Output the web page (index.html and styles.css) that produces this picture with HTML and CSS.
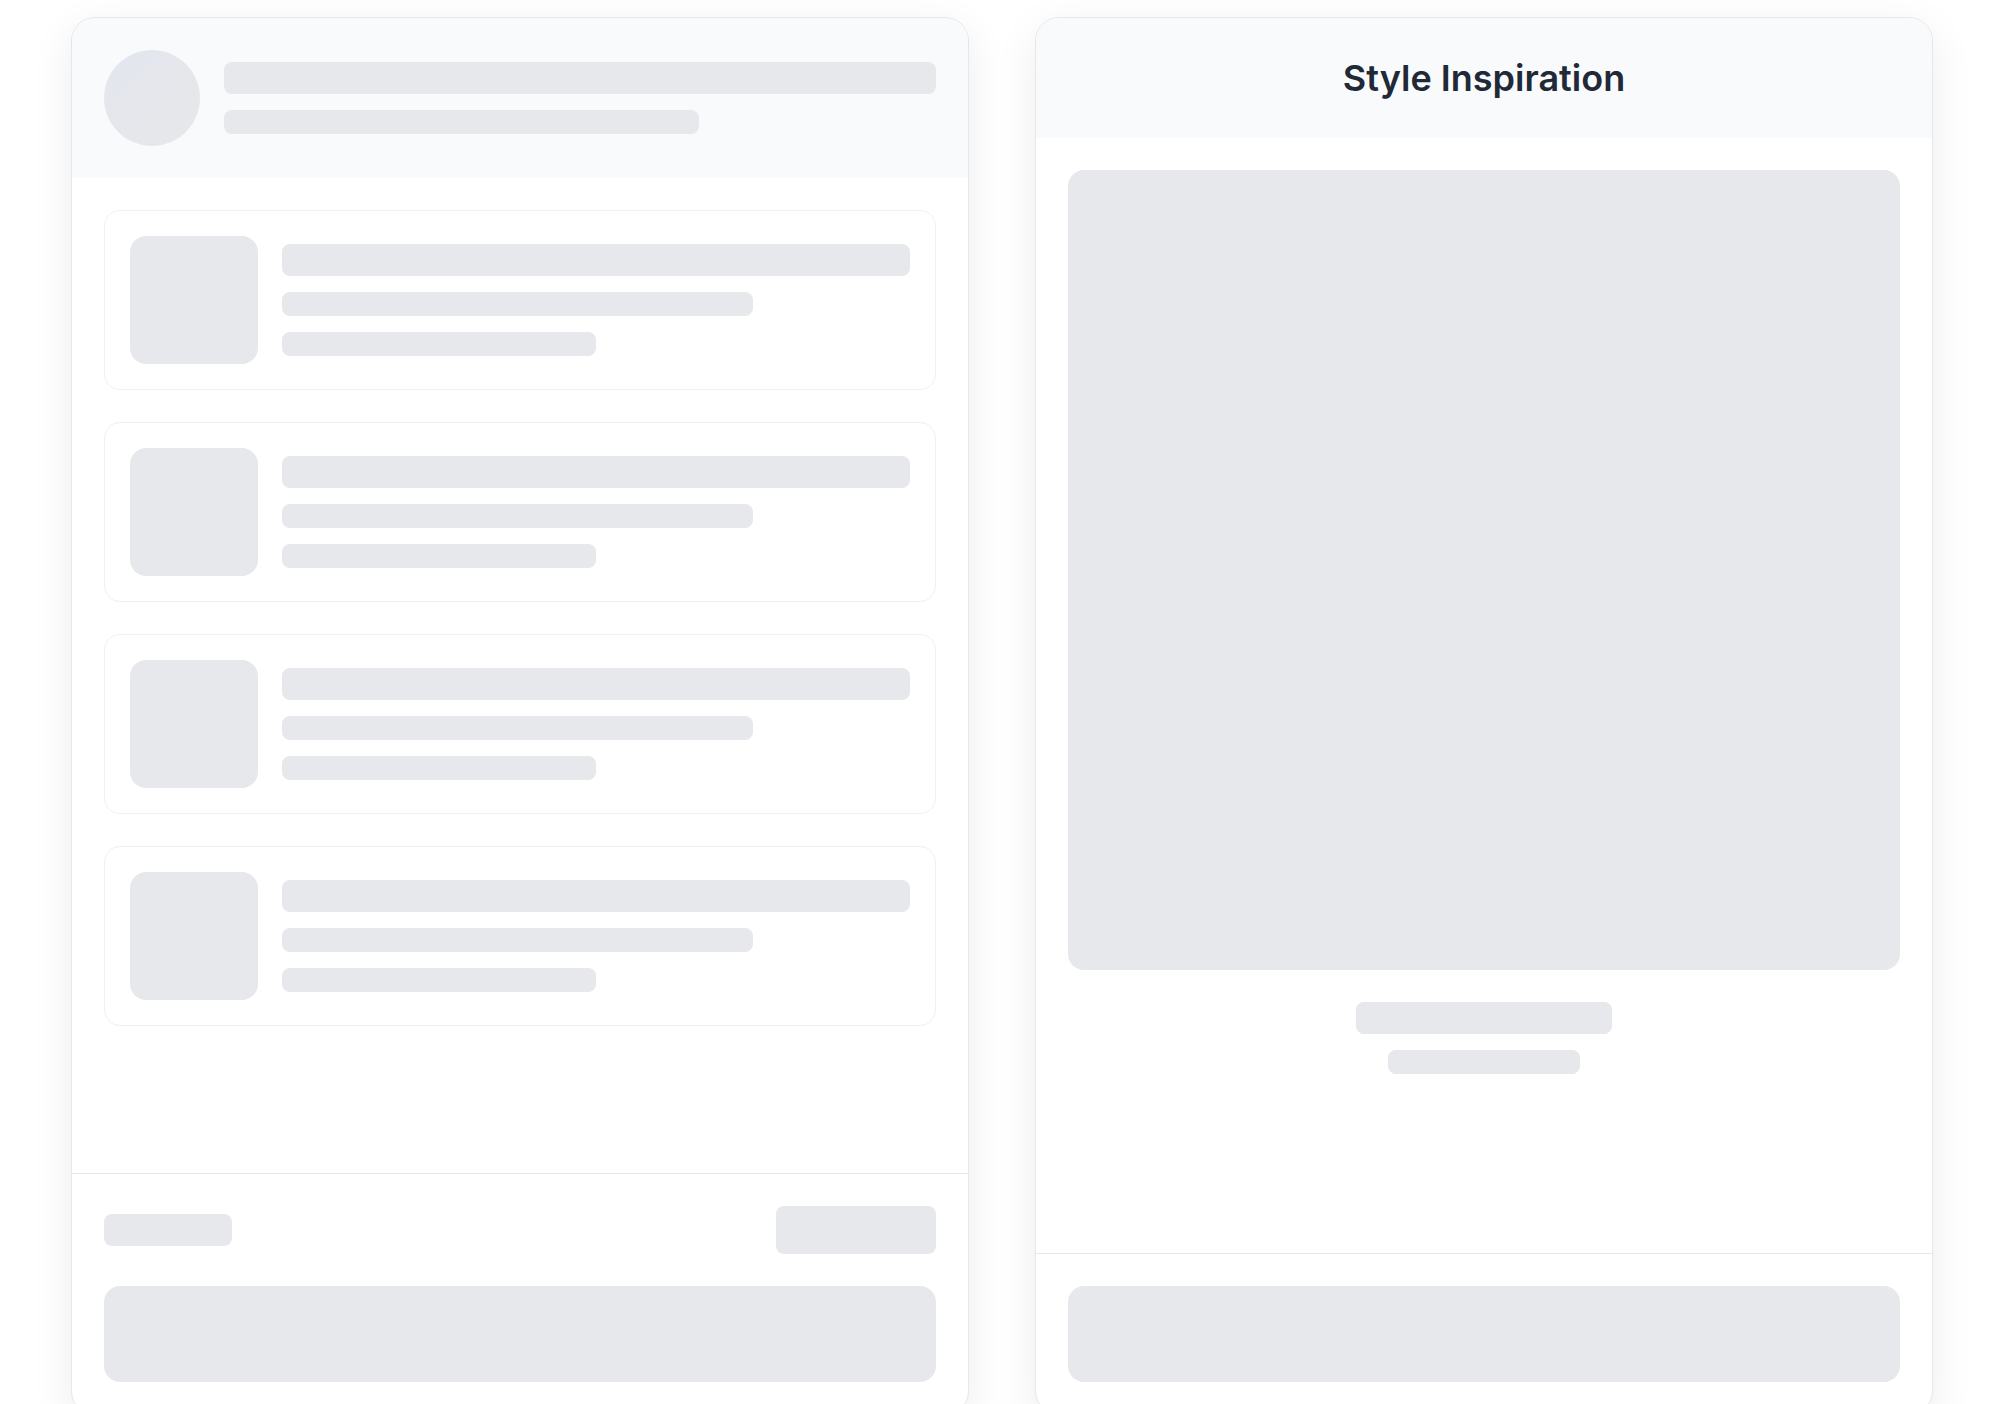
FILE: index.html
```html
<!DOCTYPE html>
<html lang="en">
<head>
<meta charset="utf-8">
<title>Skeleton</title>
<link rel="stylesheet" href="styles.css">
</head>
<body>
<main class="page">
  <section class="card">
    <header class="card-head profile">
      <div class="avatar"></div>
      <div class="head-lines">
        <div class="sk sk-32 w-full"></div>
        <div class="sk sk-24 w-two-thirds"></div>
      </div>
    </header>
    <div class="card-body list">
      <div class="item">
        <div class="thumb"></div>
        <div class="item-lines">
          <div class="sk sk-32 w-full"></div>
          <div class="sk sk-24 w-75"></div>
          <div class="sk sk-24 w-50"></div>
        </div>
      </div>
      <div class="item">
        <div class="thumb"></div>
        <div class="item-lines">
          <div class="sk sk-32 w-full"></div>
          <div class="sk sk-24 w-75"></div>
          <div class="sk sk-24 w-50"></div>
        </div>
      </div>
      <div class="item">
        <div class="thumb"></div>
        <div class="item-lines">
          <div class="sk sk-32 w-full"></div>
          <div class="sk sk-24 w-75"></div>
          <div class="sk sk-24 w-50"></div>
        </div>
      </div>
      <div class="item">
        <div class="thumb"></div>
        <div class="item-lines">
          <div class="sk sk-32 w-full"></div>
          <div class="sk sk-24 w-75"></div>
          <div class="sk sk-24 w-50"></div>
        </div>
      </div>
    </div>
    <footer class="card-foot">
      <div class="foot-row">
        <div class="sk sk-32 foot-label"></div>
        <div class="sk foot-btn"></div>
      </div>
      <div class="sk big-btn"></div>
    </footer>
  </section>

  <section class="card">
    <header class="card-head title-head">
      <h1 class="title">Style Inspiration</h1>
    </header>
    <div class="card-body preview">
      <div class="sk image"></div>
      <div class="caption">
        <div class="sk sk-32 cap-1"></div>
        <div class="sk sk-24 cap-2"></div>
      </div>
    </div>
    <footer class="card-foot">
      <div class="sk big-btn"></div>
    </footer>
  </section>
</main>
</body>
</html>
```

FILE: styles.css
```css
html, body {
  margin: 0;
  padding: 0;
  background: #ffffff;
  height: 100%;
  overflow: hidden;
}

body {
  font-family: Inter, "Liberation Sans", sans-serif;
}

.page {
  display: grid;
  grid-template-columns: 898px 898px;
  column-gap: 66px;
  padding: 17px 0 0 71px;
}

.card {
  box-sizing: border-box;
  height: 1398px;
  display: flex;
  flex-direction: column;
  background: #ffffff;
  border: 1px solid #e5e7eb;
  border-radius: 24px;
  overflow: hidden;
  box-shadow: 0 12px 44px rgba(0, 0, 0, 0.075);
}

.card-head {
  background: #f9fafb;
}

.profile {
  display: flex;
  align-items: center;
  gap: 24px;
  padding: 32px;
}

.avatar {
  width: 96px;
  height: 96px;
  flex: none;
  border-radius: 50%;
  background: linear-gradient(135deg, #e3e6f0 0%, #e6e7eb 60%, #e7e8ec 100%);
}

.head-lines {
  flex: 1;
  display: flex;
  flex-direction: column;
  gap: 16px;
}

.sk {
  background: #e7e8ec;
  border-radius: 8px;
}

.sk-32 { height: 32px; }
.sk-24 { height: 24px; }
.w-full { width: 100%; }
.w-two-thirds { width: 66.7%; }
.w-75 { width: 75%; }
.w-50 { width: 50%; }

.card-body {
  flex: 1;
  padding: 32px;
}

.list {
  display: flex;
  flex-direction: column;
  gap: 32px;
}

.item {
  display: flex;
  align-items: center;
  gap: 24px;
  padding: 25px;
  border: 1px solid #f0f1f3;
  border-radius: 16px;
}

.thumb {
  width: 128px;
  height: 128px;
  flex: none;
  border-radius: 16px;
  background: #e7e8ec;
}

.item-lines {
  flex: 1;
  display: flex;
  flex-direction: column;
  gap: 16px;
}

.card-foot {
  border-top: 1px solid #e5e7eb;
  padding: 32px;
  display: flex;
  flex-direction: column;
  gap: 32px;
}

.foot-row {
  display: flex;
  align-items: center;
  justify-content: space-between;
}

.foot-label {
  width: 128px;
}

.foot-btn {
  width: 160px;
  height: 48px;
}

.big-btn {
  height: 96px;
  border-radius: 16px;
}

.title-head {
  padding: 40px 32px;
  text-align: center;
}

.title {
  margin: 0;
  font-size: 36px;
  line-height: 40px;
  font-weight: 600;
  color: #1f2937;
}

.preview {
  display: flex;
  flex-direction: column;
  gap: 32px;
}

.image {
  height: 800px;
  border-radius: 16px;
}

.caption {
  display: flex;
  flex-direction: column;
  align-items: center;
  gap: 16px;
}

.cap-1 { width: 256px; }
.cap-2 { width: 192px; }
```
